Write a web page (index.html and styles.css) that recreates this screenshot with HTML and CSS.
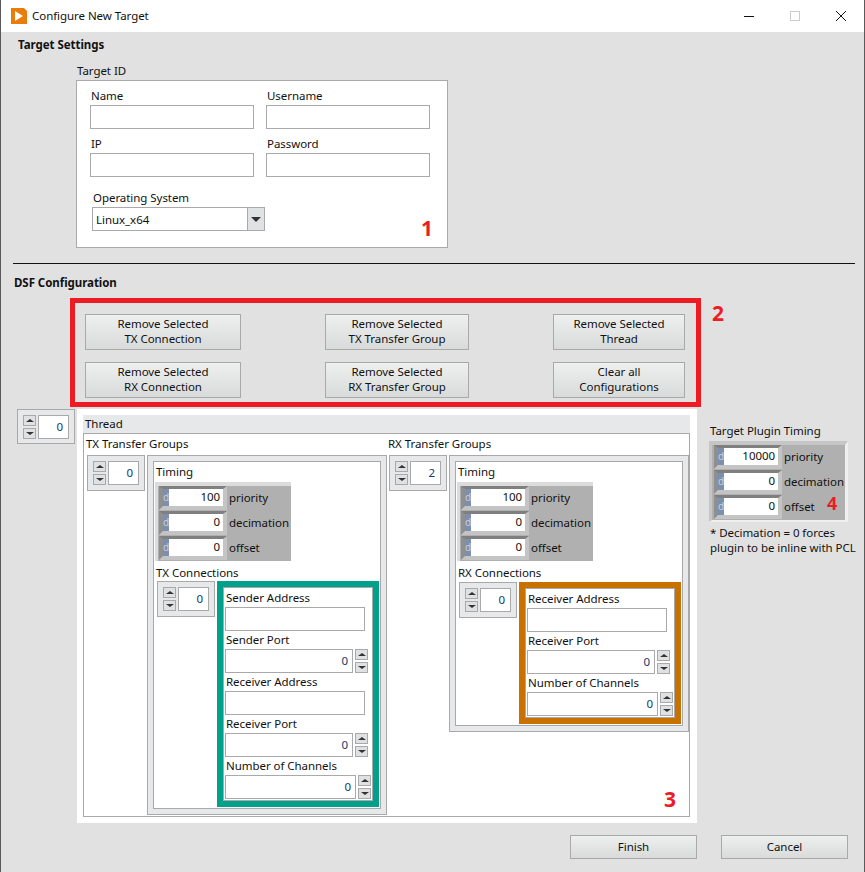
FILE: index.html
```html
<!DOCTYPE html>
<html lang="en">
<head>
  <meta charset="UTF-8">
  <title>Configure New Target</title>
  <link rel="stylesheet" href="styles.css">
</head>
<body>
  <div class="window">
    <!-- Title bar -->
    <div class="titlebar">
      <svg class="app-icon" width="16" height="16" viewBox="0 0 16 16"><path d="M0 0H13L16 3V16H0Z" fill="#e97c0c"/><path d="M4 3L12 8L4 13Z" fill="#fff"/></svg>
      <span class="title">Configure New Target</span>
      <div class="win-buttons">
        <svg width="12" height="12" viewBox="0 0 12 12"><path d="M1 6.5H11" stroke="#111" fill="none"/></svg>
        <svg width="12" height="12" viewBox="0 0 12 12"><rect x="1.5" y="1.5" width="9" height="9" stroke="#ccc" fill="none"/></svg>
        <svg width="12" height="12" viewBox="0 0 12 12"><path d="M1 1L11 11M11 1L1 11" stroke="#111" fill="none"/></svg>
      </div>
    </div>

    <!-- Target settings -->
    <h2 class="section-title first">Target Settings</h2>
    <div class="box-label">Target ID</div>
    <div class="target-box">
      <div class="target-grid">
        <div><label>Name</label><div class="input"></div></div>
        <div><label>Username</label><div class="input"></div></div>
        <div><label>IP</label><div class="input"></div></div>
        <div><label>Password</label><div class="input"></div></div>
      </div>
      <div class="os">
        <label>Operating System</label>
        <div class="combo"><div class="combo-value">Linux_x64</div><div class="combo-arrow"></div></div>
      </div>
      <span class="marker marker-1">1</span>
    </div>

    <hr class="divider">

    <!-- DSF configuration -->
    <h2 class="section-title dsf">DSF Configuration</h2>
    <div class="red-box">
      <div class="btn-col col-wide">
        <button class="btn">Remove Selected<br>TX Connection</button>
        <button class="btn">Remove Selected<br>RX Connection</button>
      </div>
      <div class="btn-col col-mid">
        <button class="btn">Remove Selected<br>TX Transfer Group</button>
        <button class="btn">Remove Selected<br>RX Transfer Group</button>
      </div>
      <div class="btn-col col-narrow">
        <button class="btn">Remove Selected<br>Thread</button>
        <button class="btn">Clear all<br>Configurations</button>
      </div>
      <span class="marker marker-2">2</span>
    </div>

    <div class="main-row">
      <div class="spinner"><div class="spin"><i class="up"></i><i class="down"></i></div><div class="num-box">0</div></div>

      <div class="thread">
        <div class="thread-head">Thread</div>
        <div class="thread-body">
          <!-- TX -->
          <div class="group group-tx">
            <div class="group-label">TX Transfer Groups</div>
            <div class="group-row">
              <div class="spinner"><div class="spin"><i class="up"></i><i class="down"></i></div><div class="num-box">0</div></div>
              <div class="cluster">
                <div class="cluster-inner">
                  <div class="timing-label">Timing</div>
                  <div class="timing">
                    <div class="t-row"><div class="t-field"><b>d</b><span>100</span></div>priority</div>
                    <div class="t-row"><div class="t-field"><b>d</b><span>0</span></div>decimation</div>
                    <div class="t-row"><div class="t-field"><b>d</b><span>0</span></div>offset</div>
                  </div>
                  <div class="conn-label">TX Connections</div>
                  <div class="conn-row">
                    <div class="spinner"><div class="spin"><i class="up"></i><i class="down"></i></div><div class="num-box">0</div></div>
                    <div class="conn teal">
                      <div class="conn-inner">
                        <div class="field"><label>Sender Address</label><div class="input address"></div></div>
                        <div class="field"><label>Sender Port</label><div class="num-line"><div class="input num port">0</div><div class="spin"><i class="up"></i><i class="down"></i></div></div></div>
                        <div class="field"><label>Receiver Address</label><div class="input address"></div></div>
                        <div class="field"><label>Receiver Port</label><div class="num-line"><div class="input num port">0</div><div class="spin"><i class="up"></i><i class="down"></i></div></div></div>
                        <div class="field"><label>Number of Channels</label><div class="num-line"><div class="input num chan">0</div><div class="spin"><i class="up"></i><i class="down"></i></div></div></div>
                      </div>
                    </div>
                  </div>
                </div>
              </div>
            </div>
          </div>
          <!-- RX -->
          <div class="group group-rx">
            <div class="group-label">RX Transfer Groups</div>
            <div class="group-row">
              <div class="spinner"><div class="spin"><i class="up"></i><i class="down"></i></div><div class="num-box">2</div></div>
              <div class="cluster">
                <div class="cluster-inner">
                  <div class="timing-label">Timing</div>
                  <div class="timing">
                    <div class="t-row"><div class="t-field"><b>d</b><span>100</span></div>priority</div>
                    <div class="t-row"><div class="t-field"><b>d</b><span>0</span></div>decimation</div>
                    <div class="t-row"><div class="t-field"><b>d</b><span>0</span></div>offset</div>
                  </div>
                  <div class="conn-label">RX Connections</div>
                  <div class="conn-row conn-row-rx">
                    <div class="spinner"><div class="spin"><i class="up"></i><i class="down"></i></div><div class="num-box">0</div></div>
                    <div class="conn orange">
                      <div class="conn-inner">
                        <div class="field"><label>Receiver Address</label><div class="input address"></div></div>
                        <div class="field"><label>Receiver Port</label><div class="num-line"><div class="input num port">0</div><div class="spin"><i class="up"></i><i class="down"></i></div></div></div>
                        <div class="field"><label>Number of Channels</label><div class="num-line"><div class="input num chan">0</div><div class="spin"><i class="up"></i><i class="down"></i></div></div></div>
                      </div>
                    </div>
                  </div>
                </div>
              </div>
            </div>
          </div>
        </div>
        <span class="marker marker-3">3</span>
      </div>

      <div class="plugin">
        <div class="plugin-label">Target Plugin Timing</div>
        <div class="timing timing-plugin">
          <div class="t-row"><div class="t-field"><b>d</b><span>10000</span></div>priority</div>
          <div class="t-row"><div class="t-field"><b>d</b><span>0</span></div>decimation</div>
          <div class="t-row"><div class="t-field"><b>d</b><span>0</span></div>offset</div>
          <span class="marker marker-4">4</span>
        </div>
        <p class="note">* Decimation = 0 forces<br>plugin to be inline with PCL</p>
      </div>
    </div>

    <div class="footer">
      <button class="btn btn-footer">Finish</button>
      <button class="btn btn-footer">Cancel</button>
    </div>
  </div>
</body>
</html>
```

FILE: styles.css
```css
body {
  margin: 0;
  font-family: "Noto Sans", "Open Sans", sans-serif;
  font-size: 11.5px;
  letter-spacing: -0.05px;
  line-height: 16px;
  color: #111;
  background-color: #e1e1e1;
}

.window {
  width: 865px;
  height: 872px;
  box-sizing: border-box;
  border-left: 1px solid #5a5a5a;
  border-right: 1px solid #5a5a5a;
  overflow: hidden;
}

/* Title bar */
.titlebar {
  height: 32px;
  background-color: #fff;
  display: flex;
  align-items: center;
  padding-left: 10px;
}

.app-icon {
  margin-right: 5px;
}

.win-buttons {
  margin-left: auto;
  display: flex;
  gap: 34px;
  padding-right: 17px;
}

.section-title {
  margin: 0;
  font-size: inherit;
  font-weight: bold;
  line-height: 16px;
}

.section-title.first {
  margin: 5px 0 0 17px;
}

.section-title.dsf {
  margin: 11px 0 0 13px;
}

.box-label {
  margin: 10px 0 1px 76px;
}

/* Target ID */
.target-box {
  position: relative;
  width: 372px;
  height: 168px;
  box-sizing: border-box;
  margin-left: 75px;
  padding: 7px 0 0 13px;
  background-color: #fff;
  border: 1px solid #a9a9a9;
}

.target-grid {
  display: grid;
  grid-template-columns: 164px 164px;
  column-gap: 12px;
  row-gap: 7px;
}

label {
  display: block;
  padding-left: 1px;
}

.target-grid label {
  margin-bottom: 1px;
}

.input {
  height: 24px;
  box-sizing: border-box;
  background-color: #fff;
  border: 1px solid #a9a9a9;
}

.os {
  margin: 13px 0 0 2px;
}

.os label {
  margin-bottom: 1px;
}

.combo {
  display: flex;
  width: 173px;
  height: 24px;
}

.combo-value {
  width: 156px;
  box-sizing: border-box;
  border: 1px solid #a9a9a9;
  padding: 4px 3px 0;
  line-height: 16px;
}

.combo-arrow {
  width: 17px;
  box-sizing: border-box;
  border: 1px solid #a9a9a9;
  border-left: 0;
  background-color: #e0e2e4;
  display: flex;
  align-items: center;
  justify-content: center;
}

.combo-arrow::before {
  content: "";
  border-left: 5px solid transparent;
  border-right: 5px solid transparent;
  border-top: 5px solid #333;
}

.divider {
  margin: 15px 0 0 12px;
  width: 842px;
  height: 1px;
  border: 0;
  background-color: #111;
}

/* Button block */
.red-box {
  position: relative;
  width: 631px;
  height: 109px;
  box-sizing: border-box;
  margin: 7px 0 0 69px;
  padding: 11px 11px 0 10px;
  border: 5px solid #ed1c24;
  display: flex;
  justify-content: space-between;
}

.btn-col {
  display: flex;
  flex-direction: column;
  gap: 12px;
}

.col-wide { width: 156px; }
.col-mid { width: 144px; }
.col-narrow { width: 132px; }

.btn {
  height: 36px;
  padding: 0 0 2px;
  font: inherit;
  letter-spacing: inherit;
  line-height: 15px;
  color: #111;
  border: 1px solid #a9a9a9;
  background: linear-gradient(#eef0f0, #d9dbdb);
}

.marker {
  position: absolute;
  font-family: "Open Sans", sans-serif;
  font-size: 21px;
  font-weight: bold;
  line-height: 20px;
  color: #ed1c24;
}

.marker-1 { left: 344px; top: 137px; }
.marker-2 { left: 637px; top: 0px; }
.marker-3 { left: 587px; top: 380px; }
.marker-4 { left: 115px; top: 48px; font-size: 18px; }

/* Main row */
.main-row {
  display: flex;
  align-items: flex-start;
  margin-top: 2px;
  padding-left: 16px;
  gap: 2px;
}

.spinner {
  flex: none;
  display: flex;
  gap: 2px;
  width: 58px;
  height: 36px;
  box-sizing: border-box;
  padding: 5px;
  background-color: #e6e8ea;
  border: 1px solid #a9a9a9;
}

.main-row > .spinner {
  height: 35px;
}

.spin {
  display: flex;
  flex-direction: column;
  justify-content: space-between;
  width: 13px;
  height: 24px;
  flex: none;
}

.spin i {
  display: flex;
  align-items: center;
  justify-content: center;
  height: 11px;
  box-sizing: border-box;
  background-color: #dfe1e3;
  border: 1px solid #a9a9a9;
}

.spin i::before {
  content: "";
  border-left: 4px solid transparent;
  border-right: 4px solid transparent;
}

.spin .up::before {
  border-bottom: 3px solid #333;
}

.spin .down::before {
  border-top: 3px solid #333;
}

.num-box {
  flex: none;
  width: 31px;
  height: 24px;
  box-sizing: border-box;
  padding: 3px 5px 0 0;
  text-align: right;
  background-color: #fff;
  border: 1px solid #a9a9a9;
  color: #123a6b;
}

/* Thread */
.thread {
  position: relative;
  width: 620px;
  height: 414px;
  box-sizing: border-box;
  padding: 6px 7px 6px 6px;
  background-color: #fff;
}

.thread-head {
  height: 18px;
  padding-left: 2px;
  line-height: 18px;
  background-color: #e6e8ea;
}

.thread-body {
  display: flex;
  height: 384px;
  box-sizing: border-box;
  border: 1px solid #a9a9a9;
}

.group {
  padding-top: 2px;
}

.group-tx {
  width: 304px;
  box-sizing: border-box;
  padding-left: 3px;
}

.group-label {
  margin: 0 0 3px -1px;
}

.group-rx {
  padding-left: 1px;
}

.group-row {
  display: flex;
  align-items: flex-start;
  gap: 2px;
}

.cluster {
  width: 240px;
  box-sizing: border-box;
  padding: 5px;
  background-color: #e6e8ea;
  border: 1px solid #a9a9a9;
}

.cluster-inner {
  padding: 2px 1px 1px;
  background-color: #fff;
  border: 1px solid #a9a9a9;
}

.timing-label {
  margin: 0 0 2px 1px;
}

.conn-label {
  margin: 4px 0 0 1px;
}

.conn-row {
  display: flex;
  align-items: flex-start;
  gap: 2px;
  margin-left: 2px;
}

.conn-row-rx {
  margin-top: 1px;
}

/* Grey timing panels */
.timing {
  position: relative;
  width: 136px;
  box-sizing: border-box;
  padding-left: 1px;
  background-color: #b0b0b0;
  border-top: 4px solid #dcdcdc;
  border-left: 3px solid #dcdcdc;
}

.t-row {
  display: flex;
  align-items: flex-start;
  gap: 2px;
  height: 25px;
  line-height: 23px;
  white-space: nowrap;
}

.t-field {
  display: flex;
  width: 68px;
  height: 24px;
  box-sizing: border-box;
  border-style: solid;
  border-width: 3px 4px 4px;
  border-color: #7f7f7f #c4c4c4 #c4c4c4 #8f8f8f;
}

.t-field b {
  width: 6px;
  font-weight: normal;
  font-size: 10px;
  line-height: 16px;
  text-align: center;
  color: #c8d0de;
  background-color: #7b8fae;
}

.t-field span {
  flex: 1;
  padding-right: 3px;
  text-align: right;
  line-height: 16px;
  background-color: #fff;
}

.timing-plugin {
  width: 139px;
  height: 81px;
  padding-left: 2px;
  border-top-color: #c6c6c6;
  border-left-color: #c6c6c6;
  border-right: 3px solid #efefef;
  border-bottom: 2px solid #efefef;
}

/* Connection clusters */
.conn {
  flex: none;
  width: 162px;
  box-sizing: border-box;
  border: 6px solid;
}

.teal { border-color: #00a08a; }
.orange { border-color: #c87000; }

.conn-inner {
  padding: 2px 1px 1px;
  background-color: #fff;
  border: 1px solid #a9a9a9;
}

.field + .field {
  margin-top: 1px;
}

.field label {
  height: 17px;
}

.address { width: 140px; }

.num-line {
  display: flex;
  gap: 2px;
}

.num {
  padding: 3px 4px 0 0;
  text-align: right;
  color: #123a6b;
}

.port { width: 128px; }
.chan { width: 131px; }

/* Right side */
.plugin {
  margin-left: 10px;
  padding-top: 14px;
}

.plugin-label {
  margin-left: 1px;
  margin-bottom: 2px;
}

.note {
  margin: 3px 0 0 1px;
  line-height: 15px;
  white-space: nowrap;
}

.footer {
  display: flex;
  justify-content: flex-end;
  gap: 24px;
  margin-top: 12px;
  padding-right: 16px;
}

.btn-footer {
  width: 127px;
  height: 24px;
}
```
